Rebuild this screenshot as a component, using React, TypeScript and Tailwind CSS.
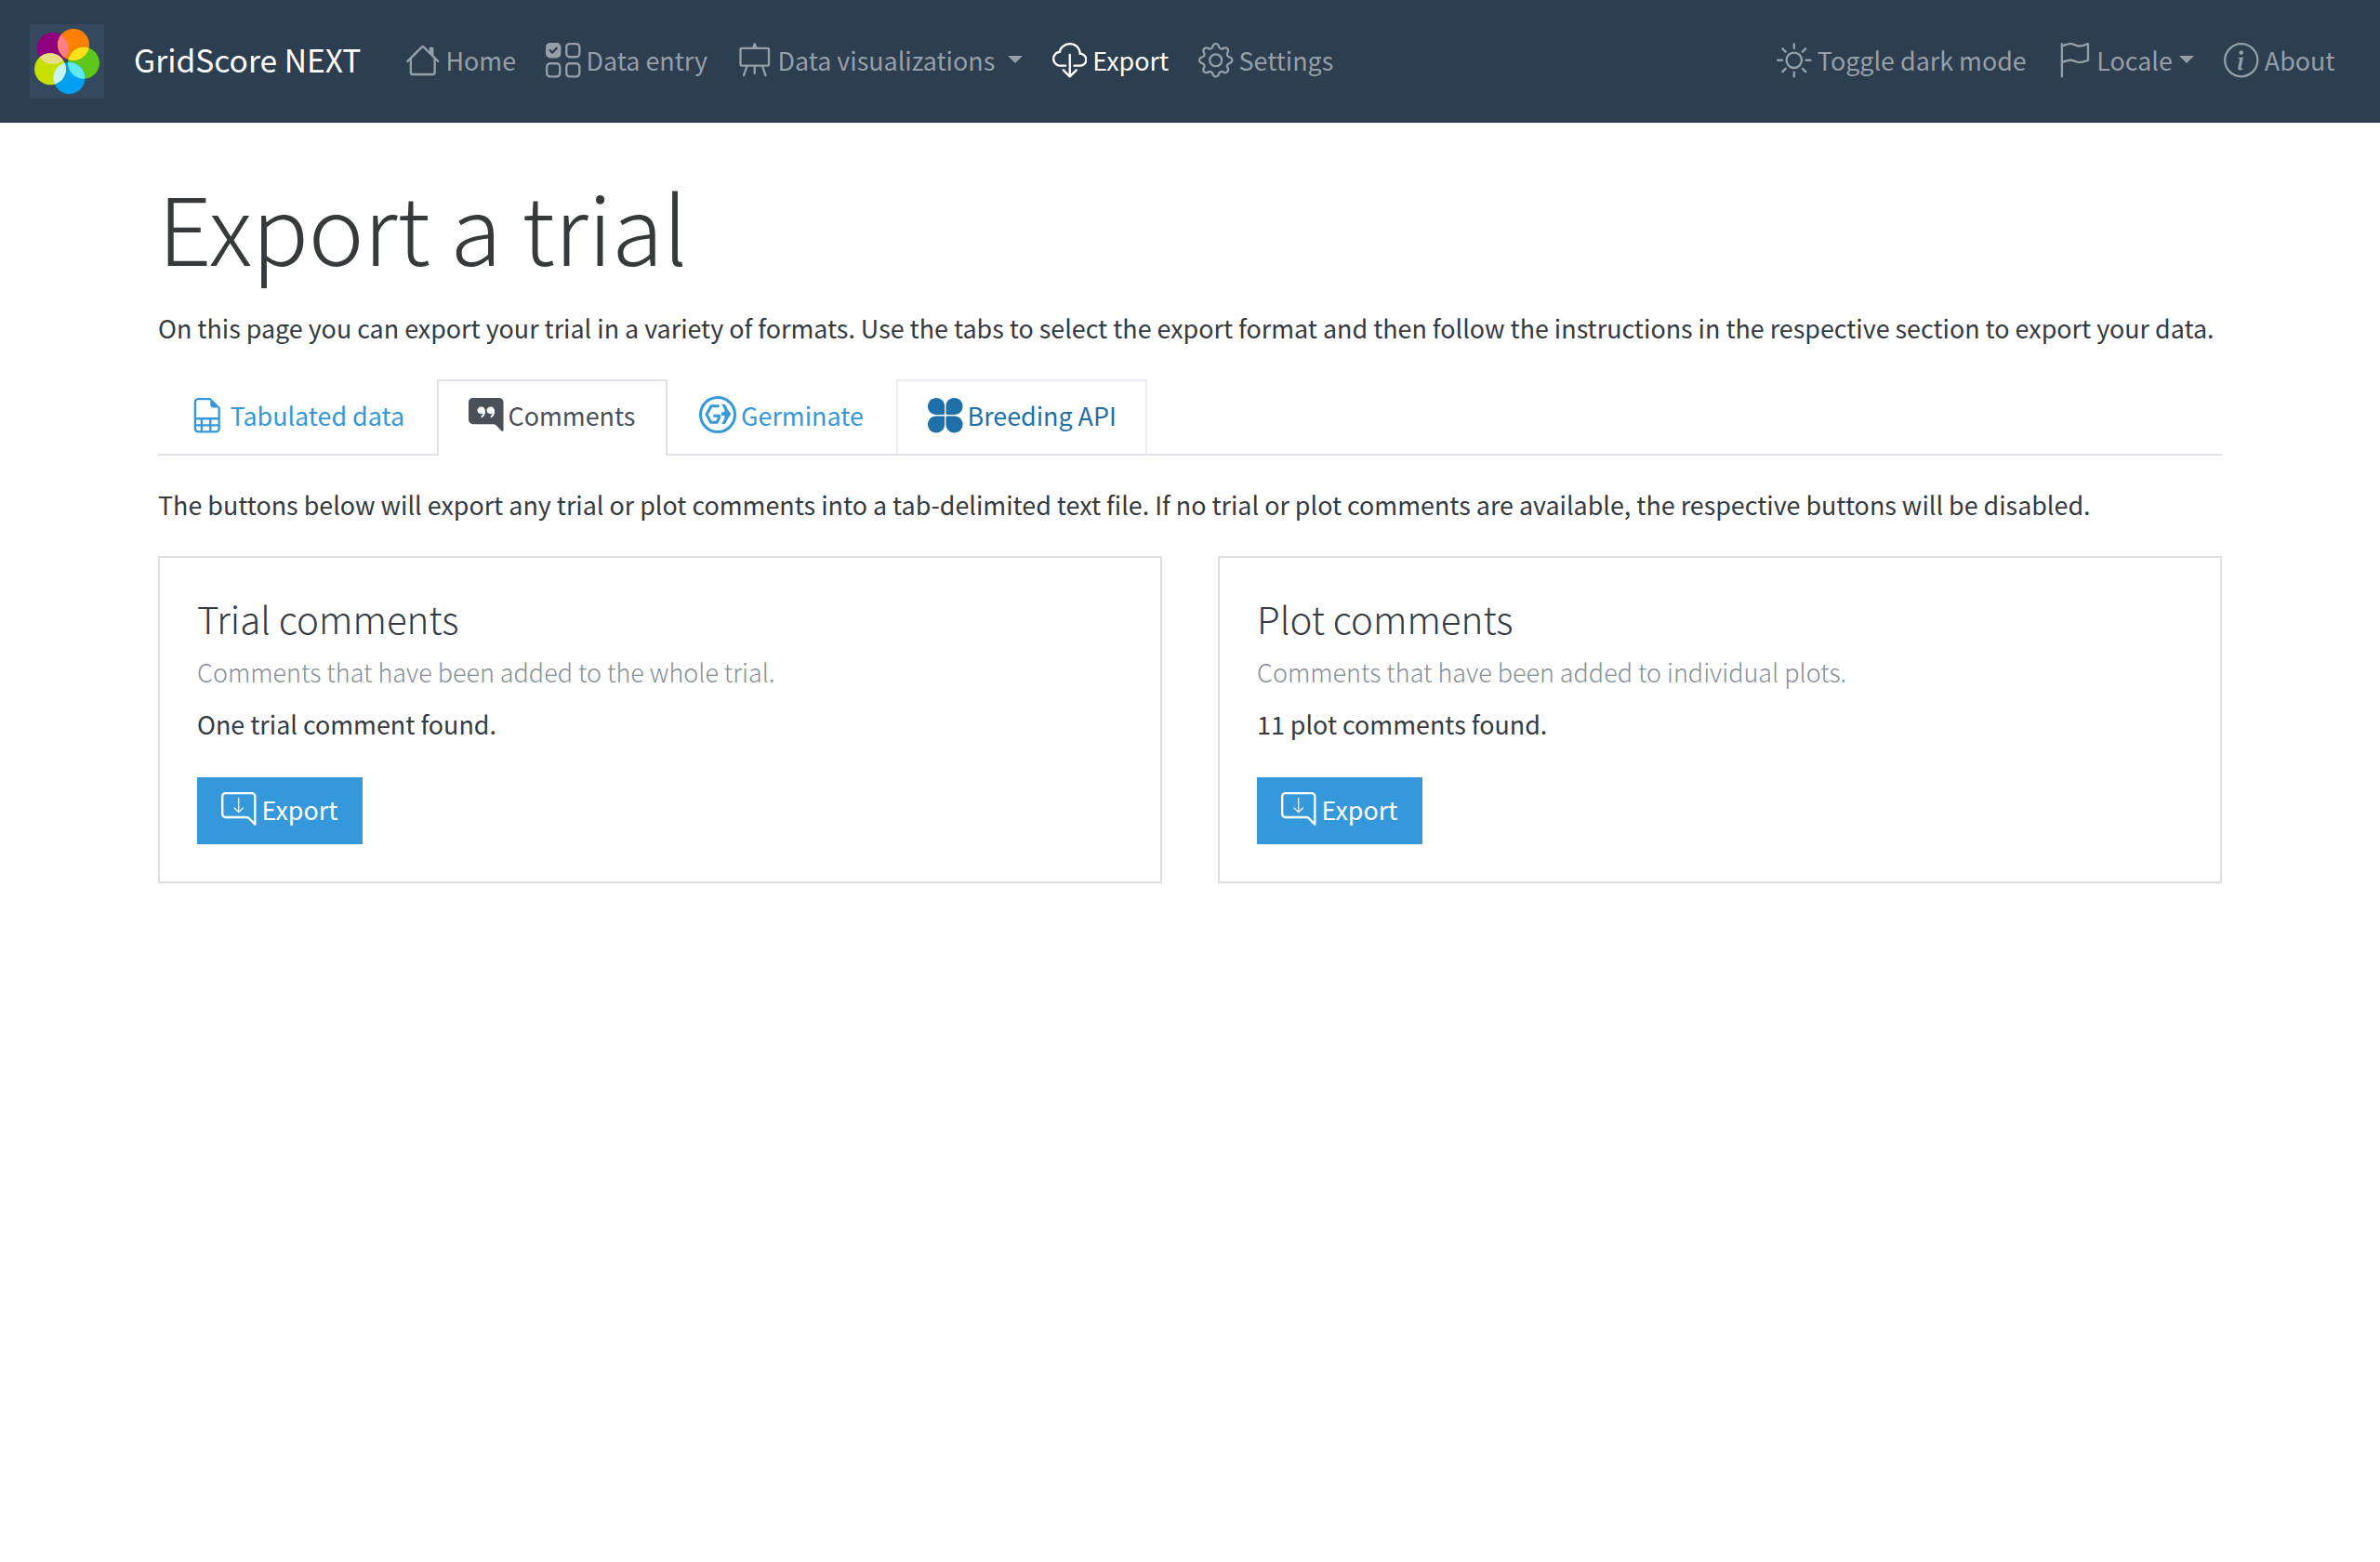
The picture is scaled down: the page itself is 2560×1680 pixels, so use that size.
import type { ReactNode } from "react";
import {
  BsChatRightQuoteFill,
  BsCloudDownload,
  BsEasel,
  BsFileEarmarkSpreadsheet,
  BsFlag,
  BsGear,
  BsHouse,
  BsInfoCircle,
  BsSun,
  BsUiChecksGrid,
} from "react-icons/bs";

const ICON = "mt-1 size-[37.5px] shrink-0";

function Logo() {
  return (
    <svg viewBox="0 0 80 80" className="mt-[26px] size-20 shrink-0">
      <defs>
        <clipPath id="orange"><circle cx="47" cy="22" r="17" /></clipPath>
        <clipPath id="green"><circle cx="58" cy="41.7" r="17" /></clipPath>
        <clipPath id="blue"><circle cx="42.4" cy="58" r="17" /></clipPath>
        <clipPath id="lime"><circle cx="22" cy="48.3" r="17" /></clipPath>
      </defs>
      <rect width="80" height="80" fill="#34495e" />
      <circle cx="24.7" cy="26" r="17" fill="#8e0080" />
      <circle cx="47" cy="22" r="17" fill="#ff8000" />
      <circle cx="58" cy="41.7" r="17" fill="#5fc71a" />
      <circle cx="42.4" cy="58" r="17" fill="#009ff2" />
      <circle cx="22" cy="48.3" r="17" fill="#c8e000" />
      <circle cx="24.7" cy="26" r="17" fill="#ff8080" clipPath="url(#orange)" />
      <circle cx="47" cy="22" r="17" fill="#ffe11a" clipPath="url(#green)" />
      <circle cx="58" cy="41.7" r="17" fill="#60e9f5" clipPath="url(#blue)" />
      <circle cx="42.4" cy="58" r="17" fill="#c8f3f3" clipPath="url(#lime)" />
      <circle cx="24.7" cy="26" r="17" fill="#e6df86" clipPath="url(#lime)" />
    </svg>
  );
}

function GerminateIcon() {
  return (
    <svg viewBox="0 0 120 120" className="mt-0.5 size-10 shrink-0" fill="none" stroke="currentColor">
      <circle cx="60" cy="60" r="55.5" strokeWidth="9" />
      <path d="M65 32H39L24 59.5 38 85h19l7-13v-8H46" strokeWidth="9" />
      <path d="M73 27h11l9 17 10 14-10 14-9 18H73l9-18v-9H72V52h10v-9z" fill="currentColor" stroke="none" />
    </svg>
  );
}

function CloverIcon() {
  return (
    <svg viewBox="0 0 38 38" className={ICON} fill="currentColor">
      <path id="petal" d="M9.2 0C14.6 0 18.3 4 18.3 9V16.8Q18.3 18.2 16.9 18.2H9C3.8 18.2 0 14.3 0 9.1 0 4 4 0 9.2 0z" />
      <use href="#petal" transform="matrix(-1 0 0 1 38 0)" />
      <use href="#petal" transform="matrix(1 0 0 -1 0 38)" />
      <use href="#petal" transform="matrix(-1 0 0 -1 38 38)" />
    </svg>
  );
}

function ChatDownloadIcon() {
  return (
    <svg viewBox="0 0 16 16" className={ICON} fill="currentColor">
      <path d="M2 1a1 1 0 0 0-1 1v8a1 1 0 0 0 1 1h9.586a2 2 0 0 1 1.414.586l2 2V2a1 1 0 0 0-1-1zm12-1a2 2 0 0 1 2 2v12.793a.5.5 0 0 1-.854.353l-2.853-2.853a1 1 0 0 0-.707-.293H2a2 2 0 0 1-2-2V2a2 2 0 0 1 2-2z" />
      <path
        transform="translate(4 2) scale(.5)"
        fillRule="evenodd"
        d="M8 1a.5.5 0 0 1 .5.5v11.793l3.146-3.147a.5.5 0 0 1 .708.708l-4 4a.5.5 0 0 1-.708 0l-4-4a.5.5 0 0 1 .708-.708L7.5 13.293V1.5A.5.5 0 0 1 8 1"
      />
    </svg>
  );
}

function Caret({ className }: { className: string }) {
  return (
    <svg viewBox="0 0 16 8" className={`mt-[18px] h-2 w-4 shrink-0 ${className}`} fill="currentColor">
      <path d="M0 0h16L8 8z" />
    </svg>
  );
}

function NavItem({ icon, children, active }: { icon: ReactNode; children: ReactNode; active?: boolean }) {
  return (
    <a className={`flex items-start gap-1.5 ${active ? "text-white" : "text-[#969fa8]"}`}>
      {icon}
      <span className="flex">{children}</span>
    </a>
  );
}

function CommentCard({ title, hint, found }: { title: string; hint: string; found: string }) {
  return (
    <section className="h-[352px] flex-1 border-2 border-[#dfdfdf] px-10 pt-[35px]">
      <h2 className="text-[40.3px] leading-[59px] font-light">{title}</h2>
      <p className="mt-1.5 text-[26.95px] font-light text-[#868e96]">{hint}</p>
      <p className="mt-[11px]">{found}</p>
      <button className="mt-[35px] flex h-[72px] w-[178px] items-start gap-1.5 bg-[#3498db] pt-3 pl-[26px] text-white">
        <ChatDownloadIcon />
        <span>Export</span>
      </button>
    </section>
  );
}

export default function App() {
  return (
    <div className="min-h-screen bg-white font-['Noto_Sans_CJK_SC',sans-serif] text-[26.87px] leading-[45px] whitespace-nowrap text-[#343a40]">
      <header className="flex h-[132px] items-start bg-[#2c3e50] px-8">
        <Logo />
        <span className="mt-9 ml-8 w-[292px] text-[33.6px] leading-[55px] text-white">GridScore NEXT</span>
        <nav className="mt-[42px] flex gap-8">
          <NavItem icon={<BsHouse className={ICON} />}>Home</NavItem>
          <NavItem icon={<BsUiChecksGrid className={ICON} />}>Data entry</NavItem>
          <NavItem icon={<BsEasel className={ICON} />}>
            Data visualizations
            <Caret className="ml-[13.6px]" />
          </NavItem>
          <NavItem icon={<BsCloudDownload className={ICON} />} active>Export</NavItem>
          <NavItem icon={<BsGear className={ICON} />}>Settings</NavItem>
        </nav>
        <nav className="mt-[42px] mr-[16.5px] ml-auto flex gap-8">
          <NavItem icon={<BsSun className={ICON} />}>Toggle dark mode</NavItem>
          <NavItem icon={<BsFlag className={ICON} />}>
            Locale
            <Caret className="ml-[7.6px]" />
          </NavItem>
          <NavItem icon={<BsInfoCircle className={ICON} />}>About</NavItem>
        </nav>
      </header>

      <main className="mx-auto w-[2220px]">
        <h1 className="pt-[43px] text-[100.8px] leading-[134px] font-light tracking-[-0.25px] text-[#373a3c]">
          Export a trial
        </h1>
        <p className="mt-[21px]">
          On this page you can export your trial in a variety of formats. Use the tabs to select the export format and
          then follow the instructions in the respective section to export your data.
        </p>

        <div className="mt-[33px] flex h-[82px] items-stretch text-[#3498db]">
          <a className="flex w-[300px] items-start gap-1.5 border-b-2 border-[#dee2e6] pt-4 pl-[34px]">
            <BsFileEarmarkSpreadsheet className={ICON} />
            <span>Tabulated data</span>
          </a>
          <a className="flex w-[248px] items-start gap-[5px] border-2 border-b-0 border-[#dee2e6] pt-3.5 pl-8 text-[#495057]">
            <BsChatRightQuoteFill className={ICON} />
            <span>Comments</span>
          </a>
          <a className="flex w-[246px] items-start gap-[5px] border-b-2 border-[#dee2e6] pt-4 pl-[34px]">
            <GerminateIcon />
            <span>Germinate</span>
          </a>
          <a className="flex w-[270px] items-start gap-[5px] border-2 border-[#e9edf1] border-b-[#dee2e6] pt-3.5 pl-8 text-[#1f6fa8]">
            <CloverIcon />
            <span>Breeding API</span>
          </a>
          <div className="flex-1 border-b-2 border-[#dee2e6]" />
        </div>

        <p className="mt-[30px]">
          The buttons below will export any trial or plot comments into a tab-delimited text file. If no trial or plot
          comments are available, the respective buttons will be disabled.
        </p>

        <div className="mt-[33px] flex gap-[60px]">
          <CommentCard
            title="Trial comments"
            hint="Comments that have been added to the whole trial."
            found="One trial comment found."
          />
          <CommentCard
            title="Plot comments"
            hint="Comments that have been added to individual plots."
            found="11 plot comments found."
          />
        </div>
      </main>
    </div>
  );
}
